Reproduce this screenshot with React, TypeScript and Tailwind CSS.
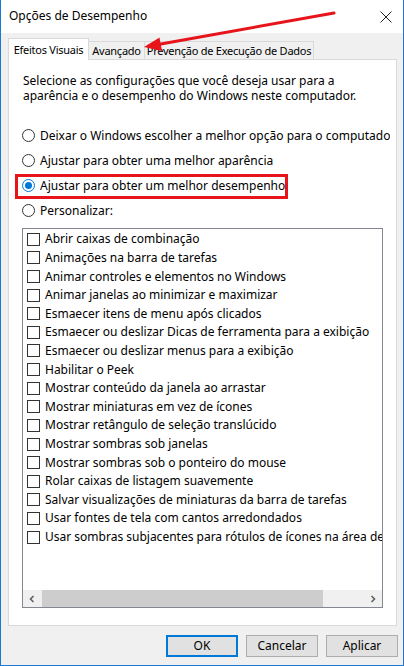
import React from "react";

const items = [
  "Abrir caixas de combinação",
  "Animações na barra de tarefas",
  "Animar controles e elementos no Windows",
  "Animar janelas ao minimizar e maximizar",
  "Esmaecer itens de menu após clicados",
  "Esmaecer ou deslizar Dicas de ferramenta para a exibição",
  "Esmaecer ou deslizar menus para a exibição",
  "Habilitar o Peek",
  "Mostrar conteúdo da janela ao arrastar",
  "Mostrar miniaturas em vez de ícones",
  "Mostrar retângulo de seleção translúcido",
  "Mostrar sombras sob janelas",
  "Mostrar sombras sob o ponteiro do mouse",
  "Rolar caixas de listagem suavemente",
  "Salvar visualizações de miniaturas da barra de tarefas",
  "Usar fontes de tela com cantos arredondados",
  "Usar sombras subjacentes para rótulos de ícones na área de trabalho",
];

const radios = [
  "Deixar o Windows escolher a melhor opção para o computador",
  "Ajustar para obter uma melhor aparência",
  "Ajustar para obter um melhor desempenho",
  "Personalizar:",
];

function Radio({ checked }: { checked?: boolean }) {
  return checked ? (
    <span className="w-[13px] h-[13px] rounded-full border border-[#0078d7] bg-white flex items-center justify-center shrink-0">
      <span className="w-[7px] h-[7px] rounded-full bg-[#0078d7]" />
    </span>
  ) : (
    <span className="w-[13px] h-[13px] rounded-full border border-[#333333] bg-white shrink-0" />
  );
}

export default function App() {
  return (
    <div
      className="relative w-[404px] h-[666px] bg-[#f0f0f0] border-l border-r border-b border-[#1c78d4] flex flex-col text-black text-[12px] overflow-hidden"
      style={{ fontFamily: '"Segoe UI", "Noto Sans", Arial, sans-serif' }}
    >
      {/* title bar */}
      <div className="h-[33px] bg-white flex items-center justify-between pl-[8px] pr-[10px] shrink-0">
        <span className="text-[12px] leading-none -mt-[1px]">Opções de Desempenho</span>
        <svg width="12" height="12" viewBox="0 0 12 12" className="mr-[1px]">
          <path d="M0.5 0.5 L11.5 11.5 M11.5 0.5 L0.5 11.5" stroke="#222" strokeWidth="1" />
        </svg>
      </div>

      {/* tabs */}
      <div className="pl-[7px] mt-[5px] flex items-end h-[21px] shrink-0 whitespace-nowrap text-[11px] tracking-[-0.25px]">
        <div className="relative z-10 -mb-px w-[81px] h-[22px] bg-white border-t border-l border-r border-[#d9d9d9] flex items-center justify-center leading-none">
          Efeitos Visuais
        </div>
        <div className="w-[56px] h-[18px] border-t border-r border-[#d9d9d9] flex items-center justify-center leading-none">
          Avançado
        </div>
        <div className="w-[169px] h-[18px] border-t border-r border-[#d9d9d9] flex items-center justify-center leading-none">
          Prevenção de Execução de Dados
        </div>
      </div>

      {/* panel */}
      <div className="relative ml-[7px] w-[389px] h-[567px] bg-white border border-[#d9d9d9] shrink-0 flex flex-col">
        <p className="pl-[14px] pt-[13px] leading-[15px]">
          Selecione as configurações que você deseja usar para a
          <br />
          aparência e o desempenho do Windows neste computador.
        </p>

        <div className="mt-[20px] flex flex-col w-[381px] overflow-hidden">
          {radios.map((r, i) => (
            <div key={r} className="h-[25px] flex items-center pl-[13px] whitespace-nowrap">
              <Radio checked={i === 2} />
              <span className="ml-[5px] leading-none">{r}</span>
            </div>
          ))}
        </div>

        {/* red annotation box */}
        <div className="absolute left-[6px] top-[114px] w-[273px] h-[25px] border-[3px] border-[#e8141c] pointer-events-none" />

        {/* list */}
        <div className="ml-[13px] mt-[5px] w-[361px] h-[380px] border border-[#828790] bg-white flex flex-col overflow-hidden">
          <div className="flex-1 flex flex-col overflow-hidden pt-[1px]">
            {items.map((t) => (
              <div key={t} className="h-[18.62px] flex items-center pl-[4px] whitespace-nowrap shrink-0">
                <span className="w-[13px] h-[13px] border border-[#333333] bg-white shrink-0" />
                <span className="ml-[5px] leading-none">{t}</span>
              </div>
            ))}
          </div>
          {/* horizontal scrollbar */}
          <div className="h-[17px] bg-[#f0f0f0] flex items-center shrink-0">
            <div className="w-[18px] h-[17px] flex items-center justify-center">
              <svg width="8" height="8" viewBox="0 0 8 8">
                <path d="M5.5 1 L2.5 4 L5.5 7" stroke="#606060" strokeWidth="1.6" fill="none" />
              </svg>
            </div>
            <div className="ml-[1px] w-[281px] h-[17px] bg-[#cdcdcd]" />
            <div className="flex-1" />
            <div className="w-[18px] h-[17px] flex items-center justify-center">
              <svg width="8" height="8" viewBox="0 0 8 8">
                <path d="M2.5 1 L5.5 4 L2.5 7" stroke="#606060" strokeWidth="1.6" fill="none" />
              </svg>
            </div>
          </div>
        </div>
      </div>

      {/* buttons */}
      <div className="mt-[9px] flex justify-end gap-[8px] pr-[5px]">
        <button className="w-[72px] h-[22px] bg-[#e1e1e1] border-2 border-[#0078d7] leading-none">OK</button>
        <button className="w-[72px] h-[22px] bg-[#e1e1e1] border border-[#adadad] leading-none">Cancelar</button>
        <button className="w-[72px] h-[22px] bg-[#e1e1e1] border border-[#adadad] leading-none">Aplicar</button>
      </div>

      {/* red arrow annotation */}
      <svg className="absolute left-0 top-0 pointer-events-none" width="404" height="666">
        <line x1="333" y1="13" x2="157" y2="44.5" stroke="#e8141c" strokeWidth="3" strokeLinecap="round" />
        <polygon points="143,47 161,51 158.5,37.5" fill="#e8141c" />
      </svg>
    </div>
  );
}
